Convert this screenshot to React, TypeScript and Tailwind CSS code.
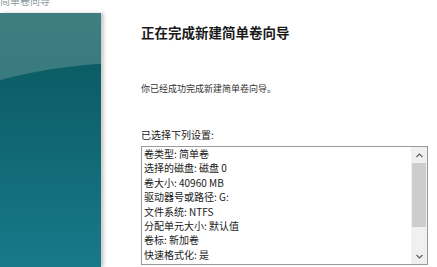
const settings = [
  '卷类型: 简单卷',
  '选择的磁盘: 磁盘 0',
  '卷大小: 40960 MB',
  '驱动器号或路径: G:',
  '文件系统: NTFS',
  '分配单元大小: 默认值',
  '卷标: 新加卷',
  '快速格式化: 是',
];

function Chevron({ down }: { down?: boolean }) {
  return (
    <svg width="7" height="5" viewBox="0 0 7 5" className="text-[#606060]">
      <path
        d={down ? 'M0.5 1 L3.5 4 L6.5 1' : 'M0.5 4 L3.5 1 L6.5 4'}
        fill="none"
        stroke="currentColor"
        strokeWidth="1.2"
      />
    </svg>
  );
}

export default function App() {
  return (
    <div className="w-[437px] h-[267px] overflow-hidden bg-white flex flex-col font-['Noto_Sans_CJK_SC','Microsoft_YaHei',sans-serif]">
      <div className="h-[13px] shrink-0 overflow-hidden">
        <p className="ml-[-20px] mt-[-6px] text-[10px] leading-[14px] text-[#8a9a9c] whitespace-nowrap">
          新建简单卷向导
        </p>
      </div>

      <div className="flex flex-1 min-h-0">
        <div className="relative w-[101px] shrink-0 overflow-hidden bg-gradient-to-b from-[#3f7f82] to-[#216b71] shadow-[3px_0_3px_rgba(0,0,0,0.2)]">
          {/* big dark arc that fills the lower part of the banner */}
          <div className="absolute left-[-375px] top-[50px] w-[1010px] h-[1010px] rounded-full bg-gradient-to-b from-[#0b5c65] to-[#187989] to-[20%]" />
        </div>

        <div className="flex-1 min-w-0 pl-[40px] pr-[10px] flex flex-col">
          <h1 className="mt-[10px] text-[13.5px] leading-[18px] font-bold text-[#1a1a1a] whitespace-nowrap">
            正在完成新建简单卷向导
          </h1>
          <p className="mt-[41px] text-[9px] leading-[14px] text-[#333]">
            你已经成功完成新建简单卷向导。
          </p>
          <p className="mt-[32px] text-[10px] leading-[14px] text-[#222]">已选择下列设置:</p>

          <div className="mt-[4px] w-[287px] h-[119px] border border-[#9a9a9a] flex overflow-hidden">
            <div className="flex-1 pl-[2px] overflow-hidden">
              {settings.map((s) => (
                <div key={s} className="text-[10px] leading-[14.4px] text-[#1a1a1a] whitespace-nowrap">
                  {s}
                </div>
              ))}
            </div>
            <div className="w-[16px] bg-[#f0f0f0] flex flex-col items-center">
              <div className="h-[16px] flex items-center justify-center">
                <Chevron />
              </div>
              <div className="w-[14px] h-[64px] bg-[#cdcdcd]" />
              <div className="flex-1" />
              <div className="h-[16px] flex items-center justify-center">
                <Chevron down />
              </div>
            </div>
          </div>
        </div>
      </div>
    </div>
  );
}
